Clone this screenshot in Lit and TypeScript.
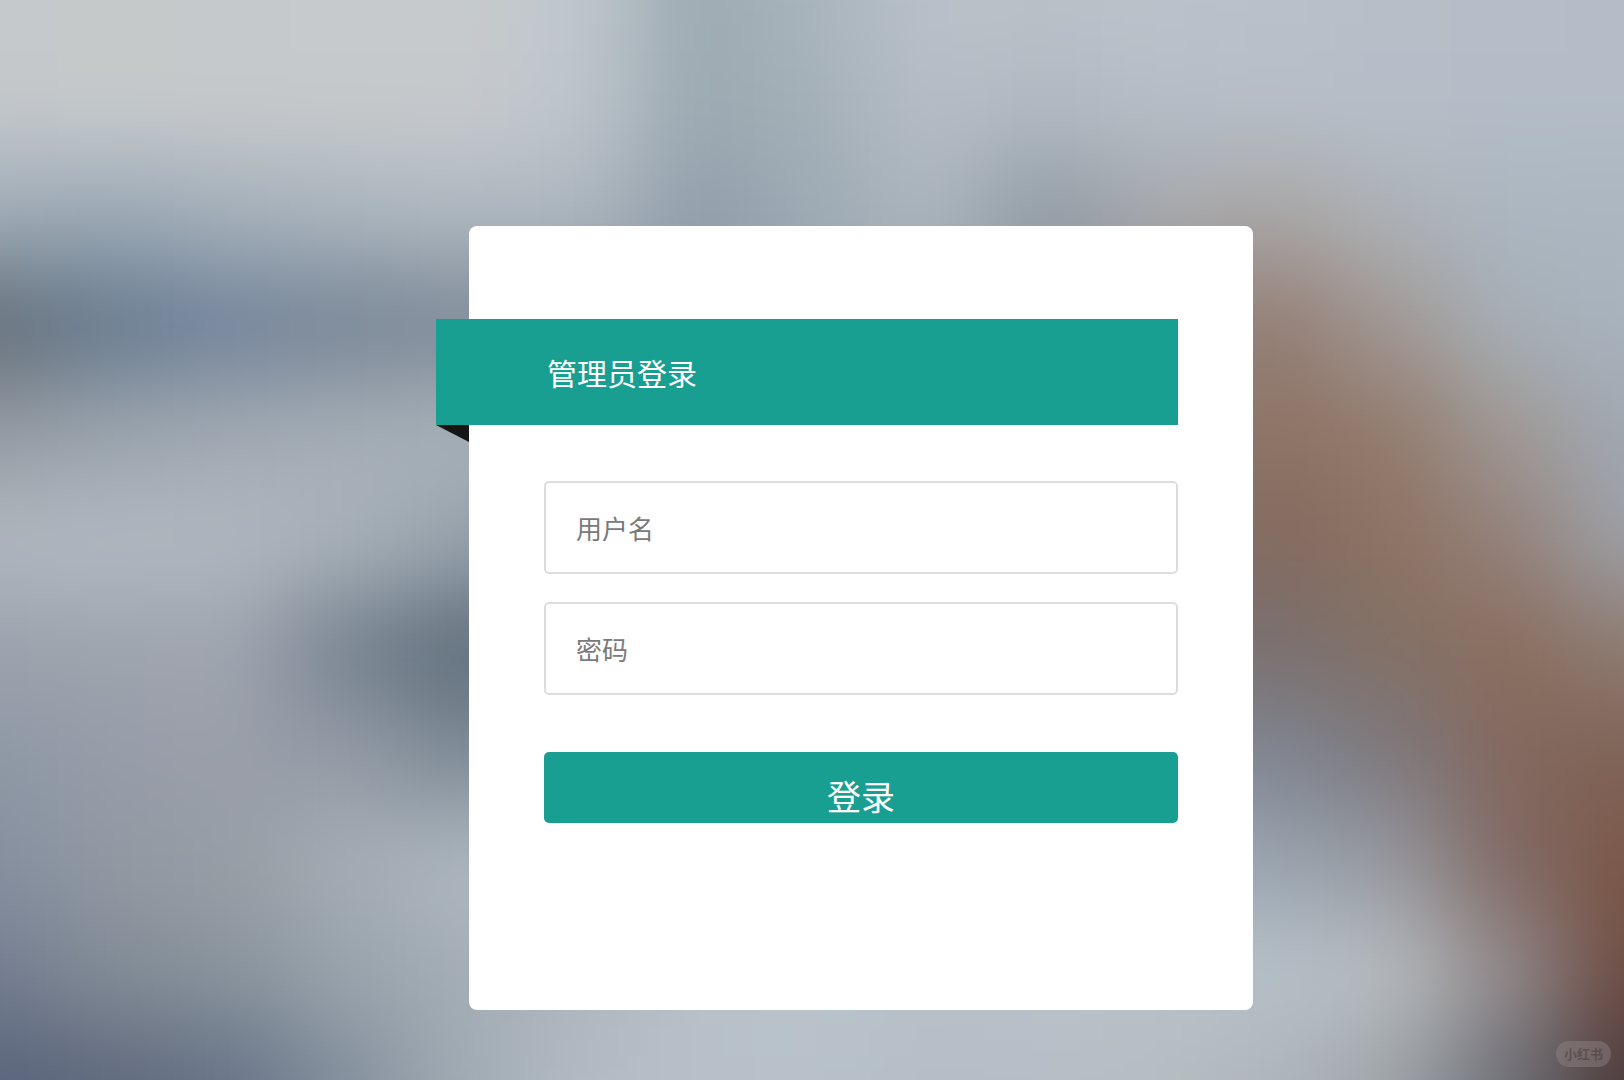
import { LitElement, css, html, svg } from "lit";
import { customElement, property } from "lit/decorators.js";

/* Colour samples of the backdrop, one row per line, left to right. */
const BACKDROP: string[][] = [
  "c5c9cb c6c9ca c6c9cb c7cacc c6cacc bfc7cd 9caab2 a9b5bd b9c1ca b9c1c8 bac2cb b8c0c9 b6bfc8 b5bec8 b4bdc7",
  "c4c8cb c5c9cb c6c9cb c6c9cb c6c9cc bec5cc 9ba9b1 a4b0b8 b5bdc5 b0b9c1 b5bdc6 b6bec8 b5bec8 b4bdc7 b3bcc7",
  "9eabb6 9aa8b5 a3afb9 a9b4bd aeb8c0 acb6be 919eab 9daab4 acb5bd 909ba4 a6a8ad a8a5a3 adb1b6 abb6c0 abb6c1",
  "626e79 677a8f 72839a 778595 7c8896 818d9b 8a96a4 98a4ae 9aa4ae 90979f 94877f 947d73 a19894 a6afb6 a8b3be",
  "949ba3 9ba4ad a1a9b2 a5aeb6 a9b2ba a5aeb6 a5aeb6 a5aeb6 a5a5a5 9a928d 907d72 8c7365 937b6d 9f9894 a0a8b1",
  "b0b8c0 b0b9c1 afb7bf a9b2ba 98a3ad 848f9a 8c98a2 9aa4ae 9a9a9a 8a8078 86706a 83695f 8c7363 94807a 9da0a7",
  "9ca2ad 9ea4ad a0a5b0 74818e 5f6e7b 616e7a 7c8894 8c98a2 8c8c94 807a80 7a7074 79706f 837065 8a6e5f 8d7b70",
  "8d98a5 979da9 9a9ea9 939ba6 7d8a95 8a96a0 98a4ae a0aab4 a0a4b0 8c929c 848a98 7f8592 7c787d 84685e 7f6257",
  "8590a0 9299a3 989ea5 a5adb5 afb8c0 b0b9c1 b2bbc3 b4bdc5 b4bdc5 acb5bf a2acb8 99a4af 9799a0 806964 7c5848",
  "747e91 828c96 89949d 99a4ad a4adb5 adb6be b8c1ca bac4cb b7c1c9 bac2ca b9c2c9 b7c1ca b7bcbf 928a8c 6e4c43",
  "5a647a 606a7e 687388 838f9c a1abb4 b2bbc3 b7c0c8 b8c1c9 b5bdc7 b5bec6 b6bdc1 afb5ba 9ea3a8 6d6f77 4a3a3a",
].map((line) => line.split(" "));

const CELL_W = 116;
const CELL_H = 108;
const BLEED = 240;

@customElement("blurred-backdrop")
export class BlurredBackdrop extends LitElement {
  static styles = css`
    :host {
      display: block;
      overflow: hidden;
    }
    .field {
      display: block;
      width: 100%;
      height: 100%;
    }
  `;

  private cell(color: string, col: number, row: number) {
    const lastCol = BACKDROP[row].length - 1;
    const lastRow = BACKDROP.length - 1;
    const left = (col - 0.5) * CELL_W - (col === 0 ? BLEED : 0);
    const right = (col + 0.5) * CELL_W + (col === lastCol ? BLEED : 1);
    const top = (row - 0.5) * CELL_H - (row === 0 ? BLEED : 0);
    const bottom = (row + 0.5) * CELL_H + (row === lastRow ? BLEED : 1);
    return svg`<rect x=${left} y=${top} width=${right - left} height=${bottom - top} fill=${"#" + color}></rect>`;
  }

  render() {
    return html`
      <svg class="field" viewBox="0 0 1624 1080" preserveAspectRatio="none" aria-hidden="true">
        <defs>
          <filter
            id="soften"
            filterUnits="userSpaceOnUse"
            x="-240"
            y="-240"
            width="2104"
            height="1560"
            color-interpolation-filters="sRGB"
          >
            <feGaussianBlur stdDeviation="46"></feGaussianBlur>
          </filter>
        </defs>
        <g filter="url(#soften)">
          ${BACKDROP.map((line, row) => line.map((color, col) => this.cell(color, col, row)))}
        </g>
      </svg>
    `;
  }
}

@customElement("login-field")
export class LoginField extends LitElement {
  @property() label = "";
  @property() type = "text";
  @property() name = "";

  static styles = css`
    :host {
      display: block;
    }
    .input {
      display: block;
      box-sizing: border-box;
      width: 100%;
      height: 93px;
      margin: 0;
      padding: 0 30px;
      border: 2px solid #dcdede;
      border-radius: 5px;
      background: #fff;
      color: #333;
      font: 26px/36px "Noto Sans CJK SC", sans-serif;
      outline: none;
    }
    .input:focus-visible {
      border-color: #189f92;
    }
    .input::placeholder {
      color: #7a7a7a;
      opacity: 1;
    }
  `;

  render() {
    return html`
      <input
        class="input"
        type=${this.type}
        name=${this.name}
        aria-label=${this.label}
        placeholder=${this.label}
      />
    `;
  }
}

@customElement("app-root")
export class AppRoot extends LitElement {
  static styles = css`
    :host {
      display: block;
      font-family: "Noto Sans CJK SC", sans-serif;
    }
    .page {
      position: relative;
      display: grid;
      min-height: 100vh;
      overflow: hidden;
    }
    .backdrop,
    .stage {
      grid-area: 1 / 1;
    }
    .backdrop {
      min-height: 0;
      height: 100%;
      contain: size;
    }
    .stage {
      display: flex;
      align-items: center;
      justify-content: center;
      padding: 156px 0 0 98px;
      z-index: 1;
    }
    .card {
      box-sizing: border-box;
      width: 100%;
      max-width: 784px;
      padding: 93px 75px 187px;
      border-radius: 8px;
      background: #fff;
    }
    .ribbon {
      position: relative;
      margin: 0 0 56px -108px;
      padding: 30px 111px;
      background: #189f92;
      color: #fff;
      font-size: 30px;
      font-weight: 400;
      line-height: 46px;
    }
    .ribbon::after {
      content: "";
      position: absolute;
      top: 100%;
      left: 0;
      width: 33px;
      height: 17px;
      background: #161616;
      clip-path: polygon(0 0, 100% 0, 100% 100%);
    }
    .fields {
      display: grid;
      gap: 28px;
    }
    .submit {
      display: block;
      box-sizing: border-box;
      width: 100%;
      height: 71px;
      margin: 57px 0 0;
      padding: 17px 0 0;
      border: 0;
      border-radius: 5px;
      background: #189f92;
      color: #fff;
      font: 34px/50px "Noto Sans CJK SC", sans-serif;
      cursor: pointer;
    }
    .mark {
      position: absolute;
      right: 13px;
      bottom: 13px;
      z-index: 2;
      padding: 0 8px;
      border-radius: 13px;
      background: rgba(150, 140, 140, 0.4);
      color: rgba(70, 55, 58, 0.5);
      font-size: 13px;
      font-weight: 700;
      line-height: 26px;
    }
  `;

  render() {
    return html`
      <main class="page">
        <blurred-backdrop class="backdrop"></blurred-backdrop>
        <div class="stage">
          <form class="card" @submit=${(e: Event) => e.preventDefault()}>
            <h1 class="ribbon">管理员登录</h1>
            <div class="fields">
              <login-field label="用户名" name="username"></login-field>
              <login-field label="密码" name="password" type="password"></login-field>
            </div>
            <button class="submit" type="submit">登录</button>
          </form>
        </div>
        <span class="mark">小红书</span>
      </main>
    `;
  }
}
